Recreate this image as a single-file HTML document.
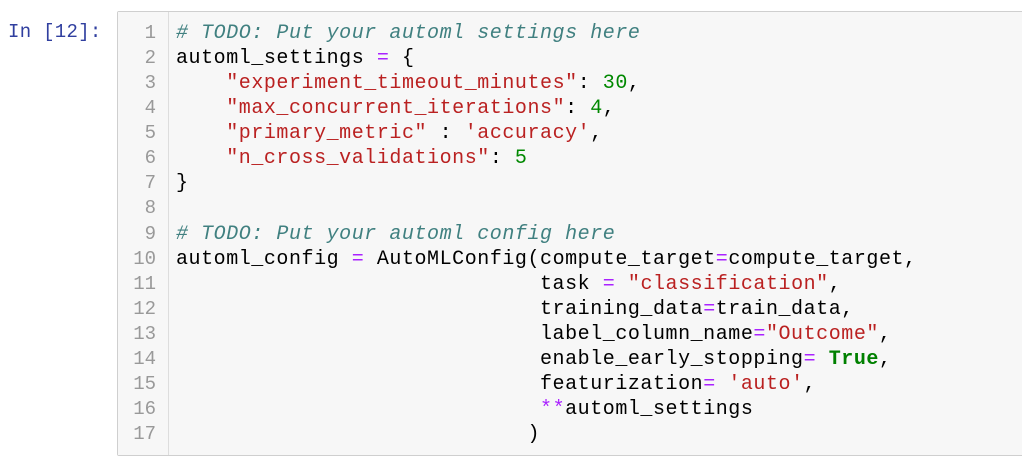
<!DOCTYPE html>
<html><head><style>
body{margin:0;background:#fff;width:1022px;height:461px;overflow:hidden;position:relative;font-family:"Liberation Mono",monospace;}
.prompt{position:absolute;left:8px;top:20px;font-size:19px;color:#303F9F;letter-spacing:0.3px;line-height:25px;}
.cell{position:absolute;left:117px;top:11px;width:920px;height:443px;background:#f7f7f7;border:1px solid #cfcfcf;border-radius:2px;}
.gut{position:absolute;left:0;top:0;width:50px;height:100%;border-right:1px solid #ddd;background:#f7f7f7;}
.nums{position:absolute;left:0;top:9px;width:38px;text-align:right;color:#999;font-size:19px;line-height:25.06px;}
pre{position:absolute;left:58px;top:9px;margin:0;font-family:"Liberation Mono",monospace;font-size:20px;letter-spacing:0.55px;line-height:25.06px;color:#000;}
.c{color:#408080;font-style:italic}.o{color:#AA22FF}.s{color:#BA2121}.n{color:#008800}.k{color:#008000;font-weight:bold}
</style></head><body>
<div class="prompt">In [12]:</div>
<div class="cell"><div class="gut"><div class="nums">1<br>2<br>3<br>4<br>5<br>6<br>7<br>8<br>9<br>10<br>11<br>12<br>13<br>14<br>15<br>16<br>17</div></div>
<pre><span class="c"># TODO: Put your automl settings here</span>
automl_settings <span class="o">=</span> {
    <span class="s">"experiment_timeout_minutes"</span>: <span class="n">30</span>,
    <span class="s">"max_concurrent_iterations"</span>: <span class="n">4</span>,
    <span class="s">"primary_metric"</span> : <span class="s">'accuracy'</span>,
    <span class="s">"n_cross_validations"</span>: <span class="n">5</span>
}

<span class="c"># TODO: Put your automl config here</span>
automl_config <span class="o">=</span> AutoMLConfig(compute_target<span class="o">=</span>compute_target,
                             task <span class="o">=</span> <span class="s">"classification"</span>,
                             training_data<span class="o">=</span>train_data,
                             label_column_name<span class="o">=</span><span class="s">"Outcome"</span>,
                             enable_early_stopping<span class="o">=</span> <span class="k">True</span>,
                             featurization<span class="o">=</span> <span class="s">'auto'</span>,
                             <span class="o">**</span>automl_settings
                            )</pre>
</div>
</body></html>
